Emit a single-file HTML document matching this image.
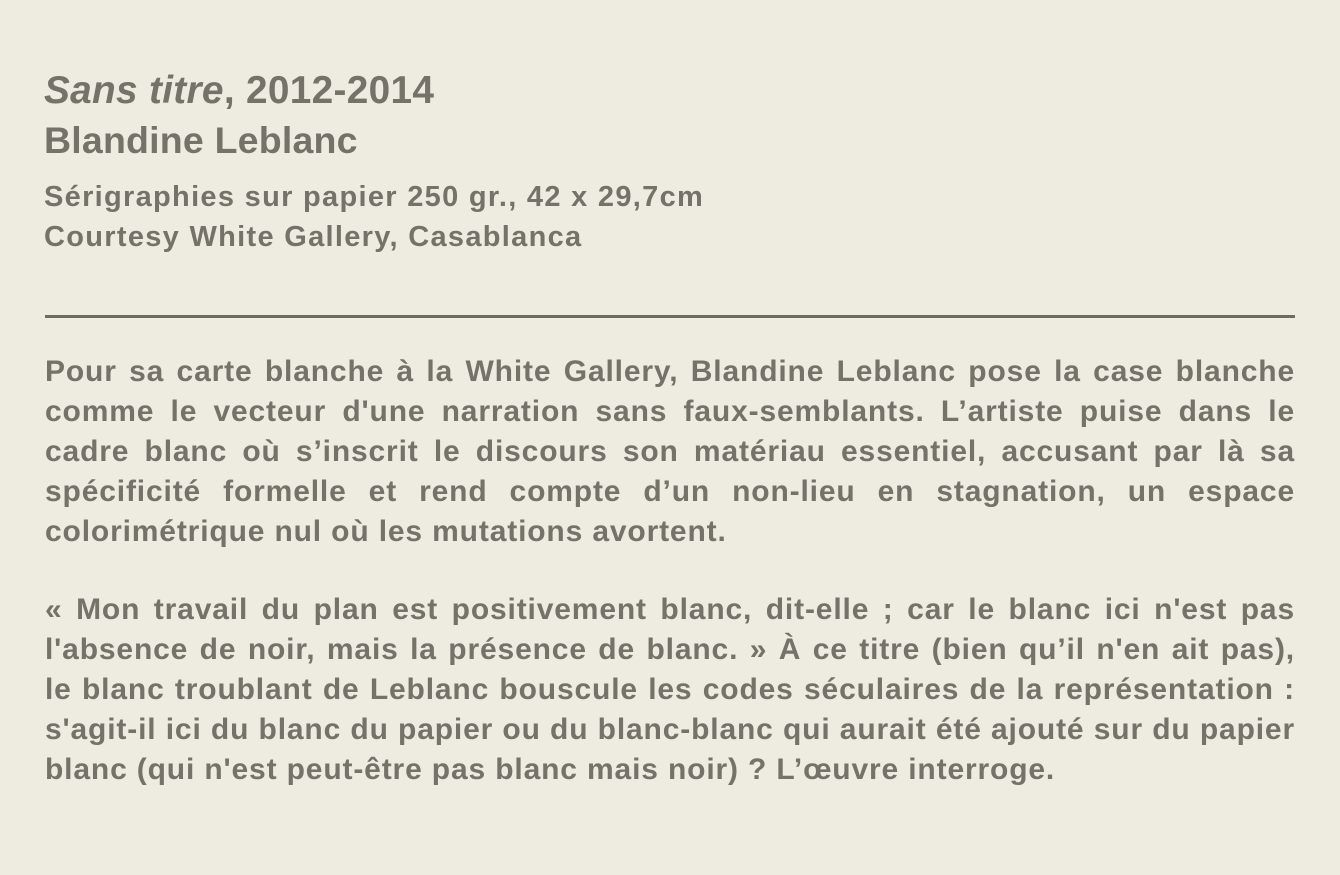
<!DOCTYPE html>
<html><head><meta charset="utf-8"><style>
html,body{margin:0;padding:0;}
body{width:1340px;height:875px;background:#eeebe1;font-family:"Liberation Sans",Arial,sans-serif;color:#75726a;position:relative;overflow:hidden;}
.t{position:absolute;left:44px;white-space:nowrap;font-weight:bold;}
.h1{top:69px;font-size:38.8px;letter-spacing:0.3px;}
.h2{top:119px;font-size:37.5px;letter-spacing:0.2px;}
.s{font-size:29px;letter-spacing:1.3px;}
.rule{position:absolute;left:45px;width:1250px;top:315px;height:3px;background:#6e6b64;}
.p{position:absolute;left:45px;width:1250px;font-size:30px;font-weight:bold;line-height:40px;letter-spacing:0.85px;}
.p div{text-align:justify;text-align-last:justify;white-space:nowrap;}
.p div.l{text-align-last:left;}
</style></head><body>
<div class="t h1"><i>Sans titre</i>, 2012-2014</div>
<div class="t h2">Blandine Leblanc</div>
<div class="t s" style="top:181px">Sérigraphies sur papier 250 gr., 42 x 29,7cm</div>
<div class="t s" style="top:221px">Courtesy White Gallery, Casablanca</div>
<div class="rule"></div>
<div class="p" style="top:352px">
<div>Pour sa carte blanche à la White Gallery, Blandine Leblanc pose la case blanche</div>
<div>comme le vecteur d'une narration sans faux-semblants. L’artiste puise dans le</div>
<div>cadre blanc où s’inscrit le discours son matériau essentiel, accusant par là sa</div>
<div>spécificité formelle et rend compte d’un non-lieu en stagnation, un espace</div>
<div class="l">colorimétrique nul où les mutations avortent.</div>
</div>
<div class="p" style="top:590px">
<div>« Mon travail du plan est positivement blanc, dit-elle ; car le blanc ici n'est pas</div>
<div>l'absence de noir, mais la présence de blanc. » À ce titre (bien qu’il n'en ait pas),</div>
<div>le blanc troublant de Leblanc bouscule les codes séculaires de la représentation :</div>
<div>s'agit-il ici du blanc du papier ou du blanc-blanc qui aurait été ajouté sur du papier</div>
<div class="l">blanc (qui n'est peut-être pas blanc mais noir) ? L’œuvre interroge.</div>
</div>
</body></html>
